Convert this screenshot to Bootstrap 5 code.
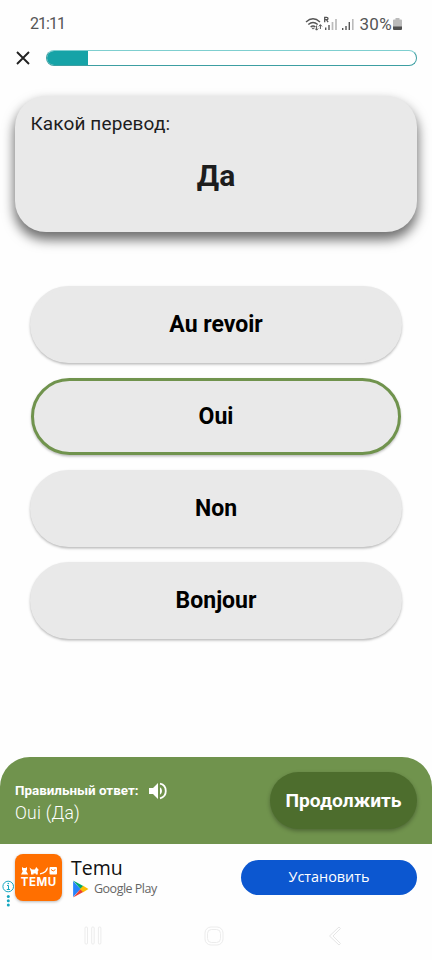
<!DOCTYPE html>
<html lang="ru">
<head>
<meta charset="utf-8">
<meta name="viewport" content="width=device-width, initial-scale=1">
<title>Перевод</title>
<link href="https://cdn.jsdelivr.net/npm/bootstrap@5.3.0/dist/css/bootstrap.min.css" rel="stylesheet">
<style>
body{font-family:Roboto,"Noto Sans",sans-serif;background:#fefefe;width:432px;height:960px;overflow:hidden;line-height:1.2;color:#1d1d1d}
svg{display:block;flex-shrink:0}
.status-bar{height:47px;padding:0 29px 0 30px;color:#555;font-size:17px}
.clock{font-size:16px;letter-spacing:-.95px;padding-top:1px}
.charge{letter-spacing:.35px;font-size:17px;line-height:20px}
.battery{margin-left:1px}
.status-icons{margin-right:1px}
.quiz-head{height:23px;padding:0 15px 0 16px}
.quiz-head svg{margin-top:-1px}
.meter{height:16px;width:371px;margin-top:-1px;border:1.4px solid #3d9fa2;border-top-color:#7fcfd0;border-radius:8px;background:#fff;font-size:0}
.meter .progress-bar{background:#16a3a7;width:42px;margin:-1px 0 -1px -1px}
.question{margin:26px 15px 0;height:136px;width:402px;border:0;border-radius:31px;background:#e9e9e9;box-shadow:0 7px 12px 1px rgba(0,0,0,.56);padding:17px 15px;color:#1d1d1d}
.prompt-text{font-size:19px;line-height:22px;letter-spacing:.12px;padding-left:.5px}
.word{font-size:30px;line-height:36px;margin-top:23px}
.answers{margin:54px 30px 0;gap:15.3px}
.answer,.answer:hover{height:76.800px;border:3px solid #e9e9e9;border-radius:39px;background:#e9e9e9;color:#000;font-size:23px;font-weight:700;padding:1px 0 0;box-shadow:0 1.500px 2.500px rgba(0,0,0,.27)}
.answer.right,.answer.right:hover{border-color:#70934d;margin:0 1px}
.result{margin-top:auto;height:87px;border-radius:30px 30px 0 0;background:#70934d;color:#fff;padding:0 15px}
.result-copy{padding-top:4px}
.result-label{font-size:13.400px;line-height:18px;font-weight:700}
.result-label svg{margin-left:9px}
.result-value{font-size:17.500px;line-height:22px;font-weight:300;letter-spacing:.25px;margin-top:2px}
.go,.go:hover{width:147px;height:57px;border:0;border-radius:29px;background:#4d6d2d;color:#fff;font-size:19.200px;font-weight:700;padding:2px 0 0;box-shadow:0 2px 4px rgba(0,0,0,.3)}
.ad{height:67px;padding:0 15px 0 0}
.ad-info{width:15px;padding-left:2px;margin-top:33px}
.app-icon{width:47px;height:47px;margin-top:-1px;border-radius:8px;background:#ff6f00;color:#fff;box-shadow:0 1px 3px rgba(0,0,0,.28);font:700 11.500px/11px Inter,"Open Sans",sans-serif}
.app-icon span{letter-spacing:.55px;margin:2px -.55px 0 0}
.ad-copy{margin-left:9px}
.app-name{font:400 19.500px/22px "Open Sans",sans-serif;color:#111}
.store{font:400 12.500px/18px "Open Sans",sans-serif;color:#666;letter-spacing:-.5px;gap:5px;margin-top:1px}
.install,.install:hover{width:176px;height:35px;border:0;border-radius:18px;background:#0c57d0;color:#fff;font:400 14.400px/20px "Open Sans",sans-serif;padding:0;margin-top:-1px}
.sys-nav{height:49px;padding:0 90px 0 84px}
.sys-nav svg:nth-child(2){margin-right:3px}
</style>
</head>
<body class="d-flex flex-column">
<header class="status-bar d-flex align-items-center justify-content-between">
  <span class="clock">21:11</span>
  <div class="status-icons d-flex align-items-center">
    <svg width="54" height="18" viewBox="0 0 54 18" fill="none" stroke="#555" stroke-width="1.400">
      <path d="M1 7Q8 .7 15 7M3.300 9.500Q8 5.500 12.700 9.500M5.600 12Q8 10 10.400 12"/><path d="M6.500 12.800h3L8 14.500z" fill="#555" stroke="none"/>
      <path d="M11.600 10.500v4.500M10 13.500l1.600 1.700 1.600-1.700M15.400 14V9.700M13.800 11.400l1.600-1.700 1.600 1.700" stroke-width="1"/>
      <path d="M19.700 7.200V2.300h1.900q1.400 0 1.400 1.200t-1.400 1.200h-1.900m1.700 0 1.700 2.500" stroke-width="1.300"/>
      <path d="M20.700 15v-2.500M24 15v-5"/><path d="M27.500 15V7M31 15V4" stroke="#bbb" stroke-width="1.700"/>
      <path d="M37.700 15v-2M41 15v-4M44.300 15V7"/><path d="M47.800 15V4" stroke="#bbb" stroke-width="1.600"/>
    </svg>
    <span class="charge">30%</span>
    <svg class="battery" width="9" height="14" viewBox="0 0 9 14"><path d="M2.500 1h4v1.500H8q1 0 1 1V10H0V3.500q0-1 1-1h1.500z" fill="#bbb"/><path d="M0 9.500h9V12q0 1-1 1H1q-1 0-1-1z" fill="#505050"/></svg>
  </div>
</header>
<div class="quiz-head d-flex align-items-center justify-content-between">
  <svg width="14" height="14" viewBox="0 0 14 14" stroke="#222" stroke-width="1.900"><path d="m1 1 12 12M13 1 1 13"/></svg>
  <div class="progress meter"><div class="progress-bar"></div></div>
</div>
<section class="card question">
  <div class="prompt-text">Какой перевод:</div>
  <div class="word fw-bold text-center">Да</div>
</section>
<main class="answers d-grid">
  <button class="btn answer">Au revoir</button>
  <button class="btn answer right">Oui</button>
  <button class="btn answer">Non</button>
  <button class="btn answer">Bonjour</button>
</main>
<section class="result d-flex align-items-center justify-content-between">
  <div class="result-copy">
    <div class="result-label d-flex align-items-center">Правильный ответ:
      <svg width="19" height="18" viewBox="0 0 19 18"><path d="M1 6h4l5-5v16l-5-5H1z" fill="#fff"/><path d="M12 5.200q2 1.300 2 3.800t-2 3.800z" fill="#fff"/><path d="M12 1.700a7.500 7.500 0 0 1 0 14.600" fill="none" stroke="#fff" stroke-width="1.800"/></svg>
    </div>
    <div class="result-value">Oui (Да)</div>
  </div>
  <button class="btn go">Продолжить</button>
</section>
<section class="ad d-flex align-items-center">
  <div class="ad-info">
    <svg width="13" height="28" viewBox="0 0 13 28"><circle cx="6.200" cy="6.500" r="5.300" fill="none" stroke="#16a7c0"/><path d="M5 5.500h1.500V9.500M4.800 9.500H8" fill="none" stroke="#16a7c0"/><g fill="#16a7c0"><circle cx="6.300" cy="3.500" r=".8"/><circle cx="6.300" cy="16.500" r="1.500"/><circle cx="6.300" cy="20.800" r="1.500"/><circle cx="6.300" cy="25.100" r="1.500"/></g></svg>
  </div>
  <div class="app-icon d-flex flex-column align-items-center justify-content-center">
    <svg width="36" height="8" viewBox="0 0 36 8" fill="#fff"><path d="M1 0l1.500 1h2L6 0v3L5.200 4l2 3.500H0L1.800 4 1 3zM8.500.5l2.500 2h3l1.200-2.500L17.800 3l-1 1v3.500h-2V6.500H12.500v1h-2.500V5zM27 0q0 6-8 7.500v-1.300Q24.500 5 25 2zM29.500 0h5.500q1 0 1 1v5.500q0 1-1 1h-5.500q-1 0-1-1V1q0-1 1-1z"/><path d="M30 2.500q2.200 3 4.400 0" stroke="#ff6f00" fill="none"/></svg>
    <span>TEMU</span>
  </div>
  <div class="ad-copy">
    <div class="app-name">Temu</div>
    <div class="store d-flex align-items-center">
      <svg width="18" height="18" viewBox="0 0 17 17"><path d="M2 1v15l7-7.500z" fill="#2684fc"/><path d="m2 .5 10 5.300L9 8.500z" fill="#00a96b"/><path d="m2 16.500 10-5.300-3-2.700z" fill="#ea4335"/><path d="m11.500 5.500 5 3-5 3-3-3z" fill="#fbbc04"/></svg>
      <span>Google Play</span>
    </div>
  </div>
  <button class="btn install ms-auto">Установить</button>
</section>
<nav class="sys-nav d-flex align-items-center justify-content-between">
  <svg width="18" height="20" viewBox="0 0 18 20" fill="none" stroke="#ececec"><rect x="1" y="1" width="2.500" height="17" rx="1"/><rect x="7.700" y="1" width="2.500" height="17" rx="1"/><rect x="14.400" y="1" width="2.500" height="17" rx="1"/></svg>
  <svg width="20" height="20" viewBox="0 0 20 20" fill="none" stroke="#ececec"><rect x="1" y="1" width="18" height="18" rx="6"/><rect x="3.500" y="3.500" width="13" height="13" rx="4"/></svg>
  <svg width="14" height="20" viewBox="0 0 14 20" fill="none" stroke="#e6e6e6"><path d="M11 1 1.500 10l9.500 9 1.500-1.500L5 10l7.500-7.500z"/></svg>
</nav>
<script src="https://cdn.jsdelivr.net/npm/bootstrap@5.3.0/dist/js/bootstrap.bundle.min.js"></script>
</body>
</html>
